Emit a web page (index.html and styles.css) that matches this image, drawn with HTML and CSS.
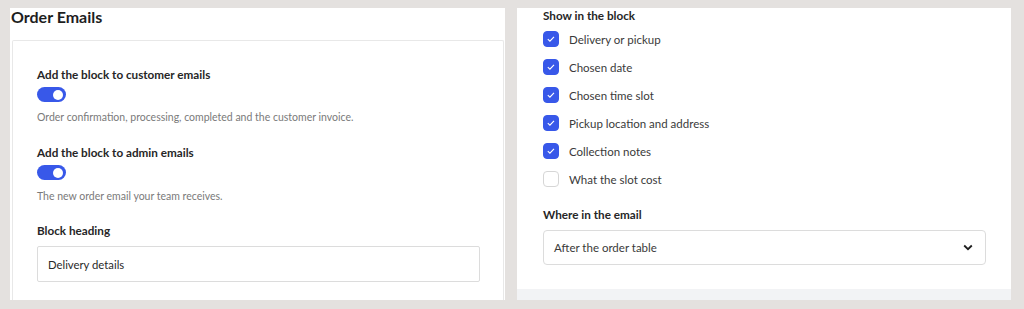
FILE: index.html
```html
<!DOCTYPE html>
<html lang="en">
<head>
    <meta charset="UTF-8">
    <meta name="viewport" content="width=device-width, initial-scale=1.0">
    <title>Order Emails</title>
    <link rel="stylesheet" href="styles.css">
</head>
<body>
    <div class="panels">
        <section class="panel panel-left">
            <h2 class="panel-title">Order Emails</h2>
            <div class="card">
                <div class="field">
                    <div class="field-label">Add the block to customer emails</div>
                    <span class="toggle is-on"><span class="knob"></span></span>
                    <p class="help">Order confirmation, processing, completed and the customer invoice.</p>
                </div>
                <div class="field">
                    <div class="field-label">Add the block to admin emails</div>
                    <span class="toggle is-on"><span class="knob"></span></span>
                    <p class="help">The new order email your team receives.</p>
                </div>
                <div class="field field-heading">
                    <div class="field-label">Block heading</div>
                    <div class="text-input">Delivery details</div>
                </div>
            </div>
        </section>

        <section class="panel panel-right">
            <div class="panel-body">
                <div class="field-label top">Show in the block</div>
                <ul class="checks">
                    <li><span class="box checked"></span>Delivery or pickup</li>
                    <li><span class="box checked"></span>Chosen date</li>
                    <li><span class="box checked"></span>Chosen time slot</li>
                    <li><span class="box checked"></span>Pickup location and address</li>
                    <li><span class="box checked"></span>Collection notes</li>
                    <li><span class="box"></span>What the slot cost</li>
                </ul>
                <div class="field-label where">Where in the email</div>
                <div class="select">
                    <span>After the order table</span>
                    <svg width="10" height="7" viewBox="0 0 10 7"><path d="M1.2 1.5 5 5.2 8.8 1.5" fill="none" stroke="#1e1e1e" stroke-width="1.8"/></svg>
                </div>
            </div>
            <div class="panel-foot"></div>
        </section>
    </div>
</body>
</html>
```

FILE: styles.css
```css
body, html {
    margin: 0;
    height: 100%;
    overflow: hidden;
    background: #e4e1df;
    font-family: Lato, "Noto Sans", sans-serif;
    color: #2f2f2f;
}

.panels {
    display: flex;
    gap: 12px;
    padding: 8px 13px 0 10px;
    height: 292px;
}

.panel {
    background: #fff;
    display: flex;
    flex-direction: column;
}

.panel-left {
    width: 495px;
}

.panel-right {
    width: 494px;
    height: 292px;
}

.panel-title {
    margin: 0;
    height: 32px;
    padding-left: 1px;
    font-size: 16px;
    font-weight: 700;
    line-height: 17px;
    color: #1e1e1e;
}

.card {
    flex: 1;
    margin: 0 1px 0 2px;
    border: 1px solid #e8e8e8;
    border-bottom: none;
    border-radius: 2px 2px 0 0;
    padding: 24px 23px 0 24px;
}

.field + .field {
    margin-top: 18px;
}

.field-heading {
    margin-top: 17px !important;
}

.field-label {
    font-size: 11.7px;
    font-weight: 700;
    line-height: 18px;
    color: #262626;
}

.toggle {
    display: flex;
    align-items: center;
    width: 29px;
    height: 15px;
    margin-top: 4px;
    border-radius: 8px;
    background: #3858e9;
    box-sizing: border-box;
    padding: 0 3px;
    justify-content: flex-end;
}

.toggle .knob {
    width: 10px;
    height: 10px;
    border-radius: 50%;
    background: #fff;
}

.help {
    margin: 7px 0 0;
    font-size: 10.5px;
    line-height: 16px;
    color: #7a7a7a;
}

.field + .field .help {
    margin-top: 8px;
}

.text-input {
    margin-top: 7px;
    height: 36px;
    border: 1px solid #dcdcdc;
    border-radius: 2px;
    box-sizing: border-box;
    padding: 0 10px;
    display: flex;
    align-items: center;
    font-size: 11.3px;
    color: #2a2a2a;
}

.panel-body {
    flex: 1;
    padding: 0 25px 0 26px;
}

.field-label.top {
    line-height: 14px;
}

.checks {
    list-style: none;
    margin: 3px 0 0;
    padding: 0;
}

.checks li {
    height: 28px;
    display: flex;
    align-items: center;
    gap: 10px;
    font-size: 11.5px;
    color: #3a3a3a;
}

.box {
    width: 16px;
    height: 16px;
    border-radius: 4px;
    border: 1px solid #d6d6d6;
    box-sizing: border-box;
    flex-shrink: 0;
}

.box.checked {
    border-color: #3858e9;
    background: #3858e9 url("data:image/svg+xml,%3Csvg xmlns='http://www.w3.org/2000/svg' width='16' height='16' viewBox='0 0 16 16'%3E%3Cpath d='M4.8 8.2 6.9 10.2 11 5.8' fill='none' stroke='%23fff' stroke-width='1.1'/%3E%3C/svg%3E") center / 16px 16px no-repeat;
}

.where {
    margin-top: 12px;
}

.select {
    margin-top: 7px;
    height: 35px;
    border: 1px solid #dcdcdc;
    border-radius: 4px;
    box-sizing: border-box;
    padding: 0 12px 0 10px;
    display: flex;
    align-items: center;
    justify-content: space-between;
    font-size: 11.5px;
    color: #3a3a3a;
}

.panel-foot {
    height: 11px;
    background: #f2f3f5;
}
```
